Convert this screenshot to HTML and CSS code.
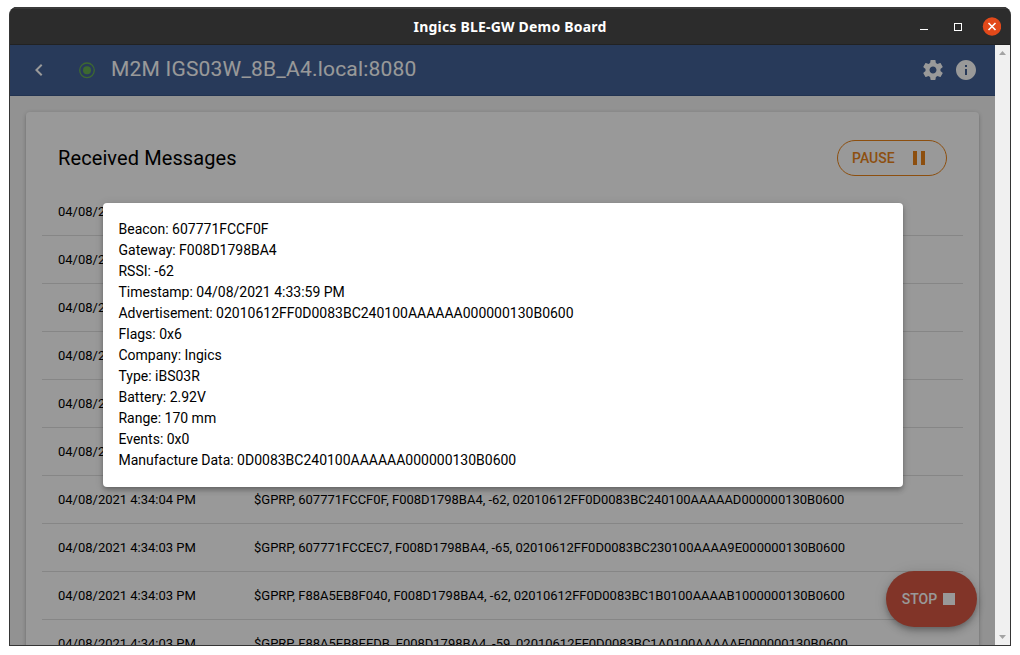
FILE: index.html
```html
<!DOCTYPE html>
<html lang="en">
<head>
<meta charset="utf-8">
<title>Ingics BLE-GW Demo Board</title>
<link rel="stylesheet" href="styles.css">
</head>
<body>
<div class="window">
  <div class="titlebar">
    <span class="window-title">Ingics BLE-GW Demo Board</span>
    <div class="window-controls">
      <svg width="88" height="20" viewBox="0 0 88 20">
        <path d="M7 12.5h8" stroke="#fff"/>
        <rect x="41.5" y="6.500" width="7" height="7" fill="none" stroke="#fff"/>
        <circle cx="79" cy="9.500" r="9.200" fill="#e2491a"/>
        <path d="M75.500 6l7 7M82.500 6l-7 7" stroke="#fff" stroke-width="1.600"/>
      </svg>
    </div>
  </div>
  <div class="client">
    <div class="page">
      <header class="appbar">
        <svg class="back" width="24" height="24" viewBox="0 0 24 24"><path d="M15.410 7.410 14 6l-6 6 6 6 1.410-1.410L10.830 12z" fill="#fff"/></svg>
        <svg class="status" width="18" height="18" viewBox="0 0 18 18"><circle cx="9" cy="9.300" r="7.300" fill="none" stroke="#66af50" stroke-width="1.300"/><circle cx="9" cy="9.300" r="4" fill="#66af50"/></svg>
        <h1 class="host">M2M IGS03W_8B_A4.local:8080</h1>
        <svg class="gear" width="24" height="24" viewBox="0 0 24 24"><path fill="#fff" d="M19.430 12.980c.04-.32.07-.64.07-.98s-.03-.66-.07-.98l2.110-1.650c.19-.15.24-.42.12-.64l-2-3.460c-.12-.22-.39-.3-.61-.22l-2.490 1c-.52-.4-1.080-.73-1.690-.98l-.38-2.650C14.460 2.180 14.250 2 14 2h-4c-.25 0-.46.18-.49.42l-.38 2.650c-.61.25-1.170.59-1.690.98l-2.490-1c-.23-.09-.49 0-.61.22l-2 3.460c-.13.22-.07.49.12.64l2.110 1.650c-.04.32-.07.65-.07.98s.03.66.07.98l-2.110 1.650c-.19.15-.24.42-.12.64l2 3.460c.12.22.39.3.61.22l2.490-1c.52.4 1.080.73 1.690.98l.38 2.650c.03.24.24.42.49.42h4c.25 0 .46-.18.49-.42l.38-2.650c.61-.25 1.170-.59 1.690-.98l2.490 1c.23.09.49 0 .61-.22l2-3.460c.12-.22.07-.49-.12-.64zM12 15.500c-1.930 0-3.500-1.570-3.500-3.500s1.570-3.500 3.500-3.500 3.500 1.570 3.500 3.500-1.570 3.500-3.500 3.500z"/></svg>
        <svg class="info" width="24" height="24" viewBox="0 0 24 24"><path fill="#fff" d="M12 2C6.480 2 2 6.480 2 12s4.480 10 10 10 10-4.480 10-10S17.520 2 12 2zm1 15h-2v-6h2zm0-8h-2V7h2z"/></svg>
      </header>
      <main class="content">
        <section class="card">
          <div class="card-head">
            <h2 class="card-title">Received Messages</h2>
            <button class="pause">PAUSE<svg width="12" height="14" viewBox="0 0 12 14"><path d="M0 0h4v14H0zM8 0h4v14H8z" fill="currentColor"/></svg></button>
          </div>
          <div class="row"><span class="time">04/08/2021 4:34:05 PM</span></div>
          <div class="row"><span class="time">04/08/2021 4:34:05 PM</span></div>
          <div class="row"><span class="time">04/08/2021 4:34:05 PM</span></div>
          <div class="row"><span class="time">04/08/2021 4:34:04 PM</span></div>
          <div class="row"><span class="time">04/08/2021 4:34:04 PM</span></div>
          <div class="row"><span class="time">04/08/2021 4:34:04 PM</span></div>
          <div class="row"><span class="time">04/08/2021 4:34:04 PM</span><span>$GPRP, 607771FCCF0F, F008D1798BA4, -62, 02010612FF0D0083BC240100AAAAAD000000130B0600</span></div>
          <div class="row"><span class="time">04/08/2021 4:34:03 PM</span><span>$GPRP, 607771FCCEC7, F008D1798BA4, -65, 02010612FF0D0083BC230100AAAA9E000000130B0600</span></div>
          <div class="row"><span class="time">04/08/2021 4:34:03 PM</span><span>$GPRP, F88A5EB8F040, F008D1798BA4, -62, 02010612FF0D0083BC1B0100AAAAB1000000130B0600</span></div>
          <div class="row"><span class="time">04/08/2021 4:34:03 PM</span><span>$GPRP, F88A5EB8EEDB, F008D1798BA4, -59, 02010612FF0D0083BC1A0100AAAAAF000000130B0600</span></div>
        </section>
      </main>
      <button class="stop">STOP<span class="stop-icon"></span></button>
      <div class="backdrop">
        <div class="dialog">
          <div>Beacon: 607771FCCF0F</div>
          <div>Gateway: F008D1798BA4</div>
          <div>RSSI: -62</div>
          <div>Timestamp: 04/08/2021 4:33:59 PM</div>
          <div>Advertisement: 02010612FF0D0083BC240100AAAAAA000000130B0600</div>
          <div>Flags: 0x6</div>
          <div>Company: Ingics</div>
          <div>Type: iBS03R</div>
          <div>Battery: 2.92V</div>
          <div>Range: 170 mm</div>
          <div>Events: 0x0</div>
          <div>Manufacture Data: 0D0083BC240100AAAAAA000000130B0600</div>
        </div>
      </div>
    </div>
    <div class="scrollbar">
      <svg width="15" height="16" viewBox="0 0 15 16"><path d="M4 10l3.500-4 3.500 4z" fill="#a3a3a3"/></svg>
      <svg width="15" height="16" viewBox="0 0 15 16"><path d="M4 6l3.500 4L11 6z" fill="#a3a3a3"/></svg>
    </div>
  </div>
</div>
</body>
</html>
```
FILE: styles.css
```css
* { box-sizing: border-box; }
body { margin: 0; background: #fff; font-family: Roboto, sans-serif; color: #000; overflow: hidden; }
h1, h2 { margin: 0; font-weight: 400; }
button { font-family: inherit; margin: 0; }
svg { display: block; flex: none; }

.window {
  width: 1002px; height: 639px; margin: 7px 0 0 9px;
  border: 1px solid #353535; border-top: 0;
  border-radius: 8px 8px 0 0; overflow: hidden;
  display: flex; flex-direction: column; background: #2c2c2c;
}
.titlebar {
  height: 38px; flex: none; display: grid; grid-template-columns: 1fr auto 1fr; align-items: center;
  background: #2c2c2c; border-top: 2px solid #3a3a3a; border-bottom: 1px solid #222;
}
.window-title { grid-column: 2; color: #fff; font: 700 14px/20px "Noto Sans", sans-serif; letter-spacing: .2px; }
.window-controls { justify-self: end; padding-right: 9px; }

.client { flex: 1; min-height: 0; display: flex; }
.page { position: relative; width: 985px; overflow: hidden; background: #f4f4f4; }
.scrollbar { width: 15px; background: #f0f0f0; display: flex; flex-direction: column; justify-content: space-between; }

.appbar { height: 51px; display: flex; align-items: center; padding: 0 17px; background: #446297; border-bottom: 1px solid #3a5587; color: #fff; }
.back { margin-right: 26.500px; }
.status { margin-right: 15.500px; }
.host { flex: 1; font-size: 21px; line-height: 32px; padding-bottom: 2px; letter-spacing: .2px; }
.gear { margin-right: 9.500px; }

.content { padding: 16px; }
.card { padding: 16px; height: 620px; background: #fff; border-radius: 4px; box-shadow: 0 1px 5px rgba(0,0,0,.2), 0 2px 2px rgba(0,0,0,.14), 0 3px 1px -2px rgba(0,0,0,.12); }
.card-head { height: 60px; padding: 0 16px; display: flex; align-items: center; justify-content: space-between; }
.card-title { font-size: 20px; line-height: 32px; letter-spacing: .1px; }
.pause {
  width: 110px; height: 36px; padding: 0 21px 0 14px; display: flex; align-items: center; justify-content: space-between;
  border: 1px solid #eb8419; border-radius: 18px; background: none; color: #eb8419; font-size: 14px; font-weight: 500;
}
.row { height: 48px; padding: 0 16px; display: flex; align-items: center; border-bottom: 1px solid #e0e0e0; font-size: 13px; letter-spacing: -.008px; white-space: nowrap; }
.time { width: 196px; }

.stop {
  position: absolute; right: 18px; bottom: 18px; width: 91px; height: 56px; padding: 0 6px 0 0; border: 0; border-radius: 28px;
  display: flex; align-items: center; justify-content: center; gap: 6px;
  background: #d75843; color: #fff; font-size: 14px; font-weight: 500;
  box-shadow: 0 3px 5px -1px rgba(0,0,0,.2), 0 5px 8px rgba(0,0,0,.14), 0 1px 14px rgba(0,0,0,.12);
}
.stop-icon { width: 12px; height: 12px; background: #fff; }

.backdrop { position: absolute; inset: 0; display: flex; align-items: center; justify-content: center; background: rgba(0,0,0,.4); }
.dialog {
  width: 800px; padding: 16px; background: #fff; border-radius: 4px; font-size: 14px; line-height: 21px; letter-spacing: -.008px;
  box-shadow: 0 2px 4px -1px rgba(0,0,0,.2), 0 4px 5px rgba(0,0,0,.14), 0 1px 10px rgba(0,0,0,.12);
}
```
